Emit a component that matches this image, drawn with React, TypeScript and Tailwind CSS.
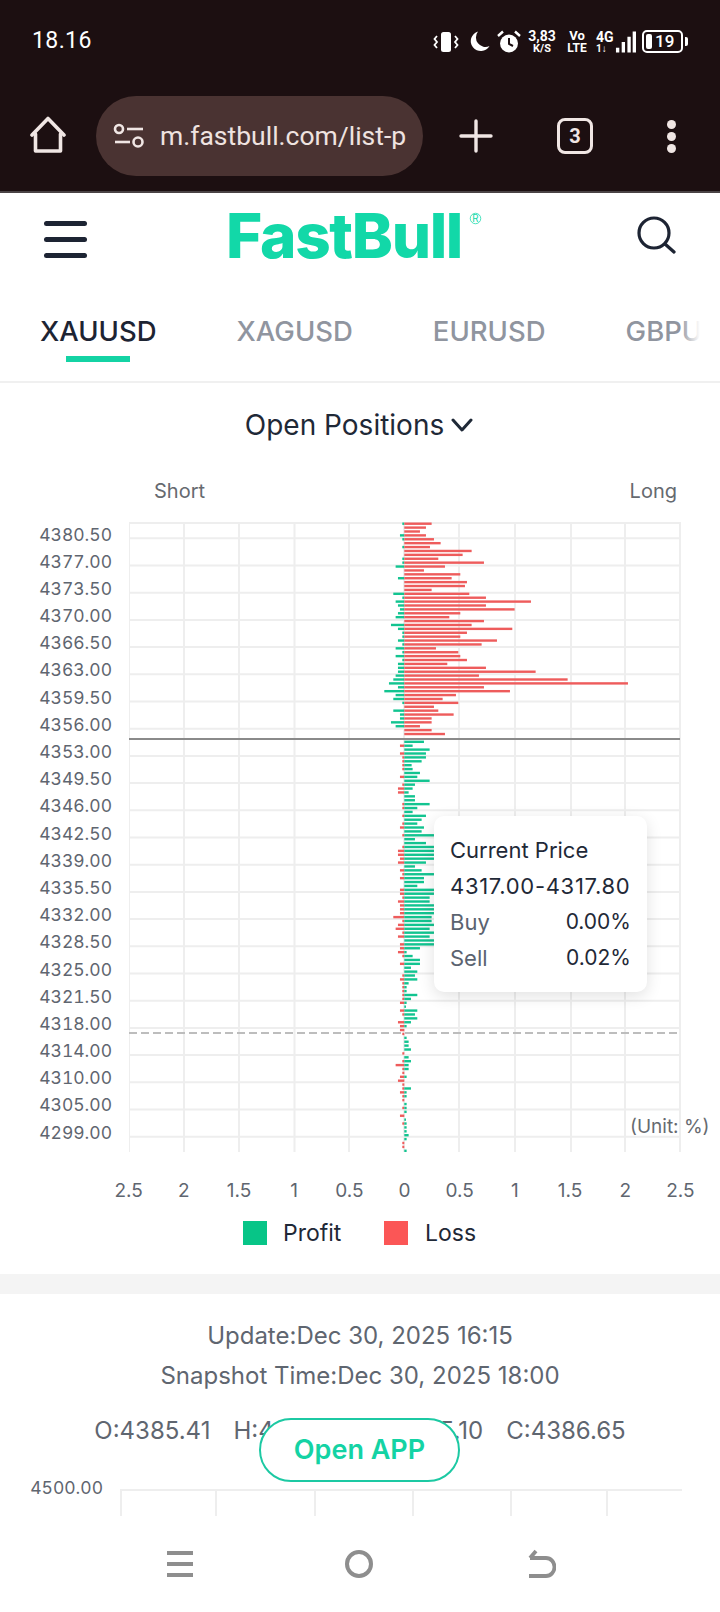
import React from "react";

// bar extents read off the chart at 3x, zero axis sits at 133
const upperRows = [
  [127,215],[133,198],[133,180],[120,198],[127,222],[133,242],[127,210],[133,335],[133,308],[127,235],
  [127,372],[107,255],[133,192],[133,301],[114,275],[133,321],[133,315],[133,215],[100,328],[127,378],
  [107,513],[114,378],[120,464],[114,301],[107,268],[133,372],[93,335],[114,457],[127,321],[127,301],
  [114,411],[127,365],[107,228],[127,295],[107,301],[127,321],[114,262],[114,378],[114,527],[107,357],
  [100,623],[87,804],[114,372],[73,450],[107,288],[100,248],[127,295],[133,222],[100,235],[120,281],
  [120,215],[93,215],[107,180],[133,215],[133,255],
];

const lowerRows = [
  [133,192],[120,158],[133,209],[120,198],[127,198],[127,185],[127,155],[127,158],[133,180],[120,172],
  [133,209],[127,165],[114,158],[114,146],[133,165],[133,165],[127,209],[127,172],[133,158],[127,198],
  [133,185],[127,172],[120,192],[133,185],[127,222],[133,165],[133,198],[127,222],[114,222],[114,222],
  [120,222],[114,198],[133,165],[120,185],[127,222],[120,192],[133,192],[133,172],[120,222],[120,222],
  [127,209],[114,209],[120,222],[120,222],[120,222],[100,215],[127,215],[114,222],[107,209],[127,222],
  [114,209],[133,222],[120,222],[120,180],[114,140],[127,158],[133,180],[120,180],[133,153],[133,172],
  [127,165],[120,172],[127,146],[127,140],[127,140],[127,172],[127,153],[120,140],[133,138],[120,172],
  [127,165],[133,172],[114,153],[120,140],[120,133],[127,133],[133,140],[133,146],[133,146],[133,153],
  [127,133],[133,146],[127,153],[107,146],[127,146],[127,133],[120,140],[114,133],[127,133],[127,153],
  [120,140],[127,140],[127,133],[133,140],[127,140],[133,140],[120,133],[133,138],[127,140],[133,140],
  [133,140],[133,146],[133,140],[127,133],[127,133],[133,140],
];

const priceLabels = [
  "4380.50","4377.00","4373.50","4370.00","4366.50","4363.00","4359.50","4356.00","4353.00","4349.50",
  "4346.00","4342.50","4339.00","4335.50","4332.00","4328.50","4325.00","4321.50","4318.00","4314.00",
  "4310.00","4305.00","4299.00",
];

const axisLabels = ["2.5","2","1.5","1","0.5","0","0.5","1","1.5","2","2.5"];

// svg x = page x - 129, svg y = page y - 520
const gridX = [0, 55, 110, 165.5, 220, 275, 330, 386, 442, 496, 551];
const gridY = [3, ...Array.from({ length: 23 }, (_, i) => 18.3 + 27.2 * i)];
const ZERO_X = 275.3;
const rowY = (i: number) => 3.7 + 3.895 * i;

const GREEN = "#12c490";
const RED = "#ee5c5c";

const PositionsChart = () => (
  <svg width="591" height="633" viewBox="0 0 591 633" className="shrink-0">
    {gridX.map((x) => (
      <line key={x} x1={x} x2={x} y1={2} y2={632} stroke="#eeeeee" strokeWidth="2" />
    ))}
    {gridY.map((y) => (
      <line key={y} x1={0} x2={551} y1={y} y2={y} stroke="#eeeeee" strokeWidth="2" />
    ))}
    {upperRows.map(([l, r], i) => (
      <g key={i}>
        <rect x={ZERO_X - (133 - l) / 3} y={rowY(i) - 1.2} width={(133 - l) / 3} height="2.4" fill={GREEN} />
        <rect x={ZERO_X} y={rowY(i) - 1.2} width={(r - 133) / 3} height="2.4" fill={RED} />
      </g>
    ))}
    <line x1={0} x2={551} y1={219} y2={219} stroke="#8a8a8a" strokeWidth="2" />
    {lowerRows.map(([l, r], i) => (
      <g key={i}>
        <rect x={ZERO_X - (133 - l) / 3} y={rowY(i + 56) - 1.2} width={(133 - l) / 3} height="2.4" fill={RED} />
        <rect x={ZERO_X} y={rowY(i + 56) - 1.2} width={(r - 133) / 3} height="2.4" fill={GREEN} />
      </g>
    ))}
    <line x1={0} x2={548} y1={513} y2={513} stroke="#bdbdbd" strokeWidth="2" strokeDasharray="8 4" />
  </svg>
);

const StatusIcons = () => (
  <div className="flex items-center text-white">
    <svg width="26" height="24" viewBox="0 0 26 24" fill="none" className="mr-[10px]">
      <rect x="8" y="2" width="10" height="20" rx="2.5" fill="#fff" />
      <path d="M4 6 L1.5 9 L4 12 L1.5 15 L4 18 M22 6 L24.5 9 L22 12 L24.5 15 L22 18" stroke="#fff" strokeWidth="1.8" />
    </svg>
    <svg width="21" height="21" viewBox="0 0 21 21" className="mr-[7px]">
      <path d="M9 0.5 A10 10 0 1 0 20.5 15 A9.5 9.5 0 0 1 9 0.5 Z" fill="#fff" />
    </svg>
    <svg width="24" height="24" viewBox="0 0 24 24" fill="none" className="mr-[7px]">
      <circle cx="12" cy="13.5" r="9" fill="#fff" />
      <path d="M12 8 V14 L16 16" stroke="#1c0f11" strokeWidth="2" />
      <path d="M1 6 L6 1.5 M23 6 L18 1.5" stroke="#fff" strokeWidth="2.4" />
    </svg>
    <div className="w-[28px] mr-[11px] flex flex-col items-center font-bold leading-none">
      <span className="text-[14px] h-[14px]">3,83</span>
      <span className="text-[11px]">K/S</span>
    </div>
    <div className="w-[20px] mr-[9px] flex flex-col items-center font-bold leading-none">
      <span className="text-[13px] h-[13px]">Vo</span>
      <span className="text-[12px]">LTE</span>
    </div>
    <div className="w-[19px] flex flex-col font-bold leading-none">
      <span className="text-[14px] h-[14px]">4G</span>
      <span className="text-[10px]">1↓</span>
    </div>
    <svg width="21" height="22" viewBox="0 0 22 22" className="mr-[6px]">
      <rect x="1" y="17" width="3.5" height="5" fill="#fff" />
      <rect x="7" y="11" width="3.5" height="11" fill="#fff" />
      <rect x="13" y="5.5" width="3.5" height="16.5" fill="#fff" />
      <rect x="18.5" y="0" width="3.5" height="22" fill="#fff" />
    </svg>
    <div className="relative flex items-center w-[41px] h-[23px] border-2 border-white rounded-[5px] pl-[2px]">
      <div className="w-[6px] h-[15px] bg-white rounded-[2px] mr-[3px]" />
      <span className="text-[17px] font-medium leading-none">19</span>
    </div>
    <div className="w-[3px] h-[9px] bg-white rounded-r-[2px] ml-[2px]" />
  </div>
);

const BrowserBar = () => (
  <div className="flex items-center h-[80px] mt-[14px] text-[#f0e6e4]">
    <svg width="40" height="40" viewBox="0 0 40 40" fill="none" className="ml-[28px] mr-[28px] shrink-0" stroke="#f0e6e4" strokeWidth="3.6" strokeLinecap="round" strokeLinejoin="round">
      <path d="M4 19 L20 2.5 L36 19" />
      <path d="M7.5 18 V35 H32.5 V18" />
    </svg>
    <div className="flex items-center w-[327px] h-[80px] rounded-full bg-[#4a3332] shrink-0 pl-[17px]">
      <svg width="32" height="26" viewBox="0 0 32 26" fill="none" stroke="#f0e6e4" strokeWidth="2.6" className="shrink-0 mr-[15px]">
        <circle cx="6" cy="6" r="4" />
        <path d="M14 6 H30" />
        <path d="M2 19 H17" />
        <circle cx="25" cy="19" r="4.5" />
      </svg>
      <div className="w-[246px] overflow-hidden whitespace-nowrap text-[26.5px] leading-none font-[Roboto,sans-serif] text-[#efe3e0]">
        m.fastbull.com/list-positions
      </div>
    </div>
    <svg width="34" height="34" viewBox="0 0 34 34" stroke="#f0e6e4" strokeWidth="3.4" strokeLinecap="round" className="ml-[36px] shrink-0">
      <path d="M17 2 V32 M2 17 H32" />
    </svg>
    <div className="flex items-center justify-center ml-[64px] w-[36px] h-[36px] border-[3.5px] border-[#f0e6e4] rounded-[8px] text-[20px] font-bold font-[Roboto,sans-serif] shrink-0">
      3
    </div>
    <div className="flex flex-col gap-[3px] ml-[74px] shrink-0">
      <div className="w-[9px] h-[9px] rounded-full bg-[#f0e6e4]" />
      <div className="w-[9px] h-[9px] rounded-full bg-[#f0e6e4]" />
      <div className="w-[9px] h-[9px] rounded-full bg-[#f0e6e4]" />
    </div>
  </div>
);

const Tabs = () => (
  <div className="relative w-[700px] h-[96px] overflow-hidden">
    <div className="flex gap-[80px] pl-[40px] pt-[29px] text-[27.5px] font-medium leading-[34px] whitespace-nowrap text-[#90959f]">
      <div className="relative text-[#1d2433]">
        XAUUSD
        <div className="absolute left-[26px] top-[42px] w-[64px] h-[6px] bg-[#14d3a4]" />
      </div>
      <div>XAGUSD</div>
      <div>EURUSD</div>
      <div>GBPUSD</div>
    </div>
    <div className="absolute right-0 top-0 w-[20px] h-full bg-gradient-to-r from-transparent to-white" />
  </div>
);

export default function App() {
  return (
    <div className="relative w-[720px] h-[1612px] overflow-hidden bg-white font-[Inter,sans-serif]">
      <div className="h-[193px] bg-[#1c0f11] border-b-2 border-[#4a4345] font-[Roboto,sans-serif]">
        <div className="flex items-center justify-between h-[82px] pl-[32px] pr-[32px] pt-[1px]">
          <span className="text-[23px] text-white tracking-[0.4px]">18.16</span>
          <StatusIcons />
        </div>
        <BrowserBar />
      </div>

      <div className="h-[1323px] overflow-hidden">
        <div className="flex items-center h-[92px] pl-[44px] pr-[44px] justify-between">
          <div className="flex flex-col gap-[11px]">
            <div className="w-[43px] h-[5px] rounded-full bg-[#1d2433]" />
            <div className="w-[43px] h-[5px] rounded-full bg-[#1d2433]" />
            <div className="w-[43px] h-[5px] rounded-full bg-[#1d2433]" />
          </div>
          <div className="flex items-start mb-[6px] mr-[14px] text-[#12d8a8]">
            <span className="text-[62px] leading-[62px] font-extrabold tracking-[-1.4px]">FastBull</span>
            <span className="text-[13px] leading-none ml-[6px] mt-[6px] w-[15px] h-[15px] border border-[#12d8a8] rounded-full text-center scale-75">R</span>
          </div>
          <svg width="40" height="38" viewBox="0 0 40 38" fill="none" stroke="#1d2433" strokeWidth="3.2" strokeLinecap="round" className="mb-[8px]">
            <circle cx="18" cy="17" r="15" />
            <path d="M29 28 L38 36" />
          </svg>
        </div>

        <Tabs />

        <div className="border-t-2 border-[#f0f0f0] h-[139px]">
          <div className="flex justify-center items-center gap-[7px] h-[84px] pr-[2px] text-[28px] text-[#1f2937]">
            <span>Open Positions</span>
            <svg width="22" height="14" viewBox="0 0 22 14" fill="none" stroke="#1f2937" strokeWidth="3" strokeLinecap="round" strokeLinejoin="round">
              <path d="M2 2 L11 12 L20 2" />
            </svg>
          </div>
          <div className="flex justify-between pl-[154px] pr-[43px] text-[20px] leading-[24px] text-[#666a70] mt-[12px]">
            <span>Short</span>
            <span>Long</span>
          </div>
        </div>

        <div className="relative flex">
          <div className="w-[112px] mr-[17px] pt-[0.5px] text-right text-[17.5px] tabular-nums text-[#5f6670] shrink-0">
            {priceLabels.map((p) => (
              <div key={p} className="h-[27.2px] leading-[27.2px]">{p}</div>
            ))}
          </div>
          <PositionsChart />
          <div className="absolute left-[434px] top-[296px] w-[213px] h-[176px] bg-white rounded-[10px] shadow-[0_4px_16px_rgba(0,0,0,0.12)] px-[16px] py-[16px] text-[22px] leading-[36px] text-[#1f2937]">
            <div>Current Price</div>
            <div className="tracking-[0.7px] whitespace-nowrap">4317.00-4317.80</div>
            <div className="flex justify-between">
              <span className="text-[#5b6370]">Buy</span>
              <span className="text-[21px]">0.00%</span>
            </div>
            <div className="flex justify-between">
              <span className="text-[#5b6370]">Sell</span>
              <span className="text-[21px]">0.02%</span>
            </div>
          </div>
          <div className="absolute left-[630px] top-[595px] text-[19px] leading-[24px] text-[#666a70] whitespace-nowrap">(Unit: %)</div>
        </div>

        <div className="grid grid-cols-11 ml-[101px] w-[607px] mt-[25px] text-[19px] leading-[26px] text-[#5f6670] text-center">
          {axisLabels.map((a, i) => (
            <span key={i}>{a}</span>
          ))}
        </div>

        <div className="flex items-center h-[24px] mt-[17px] pl-[243px] text-[23px] text-[#1f2937]">
          <div className="w-[24px] h-[24px] bg-[#07c587]" />
          <span className="ml-[16px] w-[101px]">Profit</span>
          <div className="w-[24px] h-[24px] bg-[#fb5656]" />
          <span className="ml-[17px]">Loss</span>
        </div>

        <div className="h-[20px] bg-[#f4f4f4] mt-[29px]" />

        <div className="pt-[22px] text-center text-[24px] leading-[40px] text-[#5f6670]">
          <div>Update:Dec 30, 2025 16:15</div>
          <div>Snapshot Time:Dec 30, 2025 18:00</div>
          <div className="flex justify-center gap-[23px] mt-[15px]">
            <span>O:4385.41</span>
            <span>H:4393.37</span>
            <span>L:4375.10</span>
            <span>C:4386.65</span>
          </div>
        </div>

        <div className="flex mt-[23px]">
          <div className="w-[103px] mr-[17px] h-[28px] leading-[28px] text-right text-[17.5px] tabular-nums text-[#5f6670]">4500.00</div>
          <svg width="562" height="28" viewBox="0 0 562 28" className="mt-[15px]">
            <line x1="0" x2="562" y1="1" y2="1" stroke="#eeeeee" strokeWidth="2" />
            {[1, 96, 195, 293, 391, 487].map((x) => (
              <line key={x} x1={x} x2={x} y1="0" y2="28" stroke="#eeeeee" strokeWidth="2" />
            ))}
          </svg>
        </div>
      </div>

      <div className="flex items-center h-[96px]">
        <svg width="28" height="28" viewBox="0 0 28 28" fill="#8e8e8e" className="ml-[166px]">
          <rect x="1" y="1" width="26" height="4" />
          <rect x="1" y="12" width="26" height="4" />
          <rect x="1" y="23" width="26" height="4" />
        </svg>
        <svg width="30" height="30" viewBox="0 0 30 30" fill="none" stroke="#8e8e8e" strokeWidth="4" className="ml-[150px]">
          <ellipse cx="15" cy="15" rx="12" ry="12" />
        </svg>
        <svg width="30" height="30" viewBox="0 0 30 30" fill="none" stroke="#8e8e8e" strokeWidth="3.8" className="ml-[152px]">
          <path d="M3 27 H20 A8.5 9 0 0 0 20 9 H4 M4 9 L10 2" />
        </svg>
      </div>

      <div className="absolute left-[259px] top-[1418px] flex items-center justify-center w-[201px] h-[64px] rounded-full border-2 border-[#1cc9a3] bg-white text-[27px] font-semibold text-[#14d3a4]">
        Open APP
      </div>
    </div>
  );
}
